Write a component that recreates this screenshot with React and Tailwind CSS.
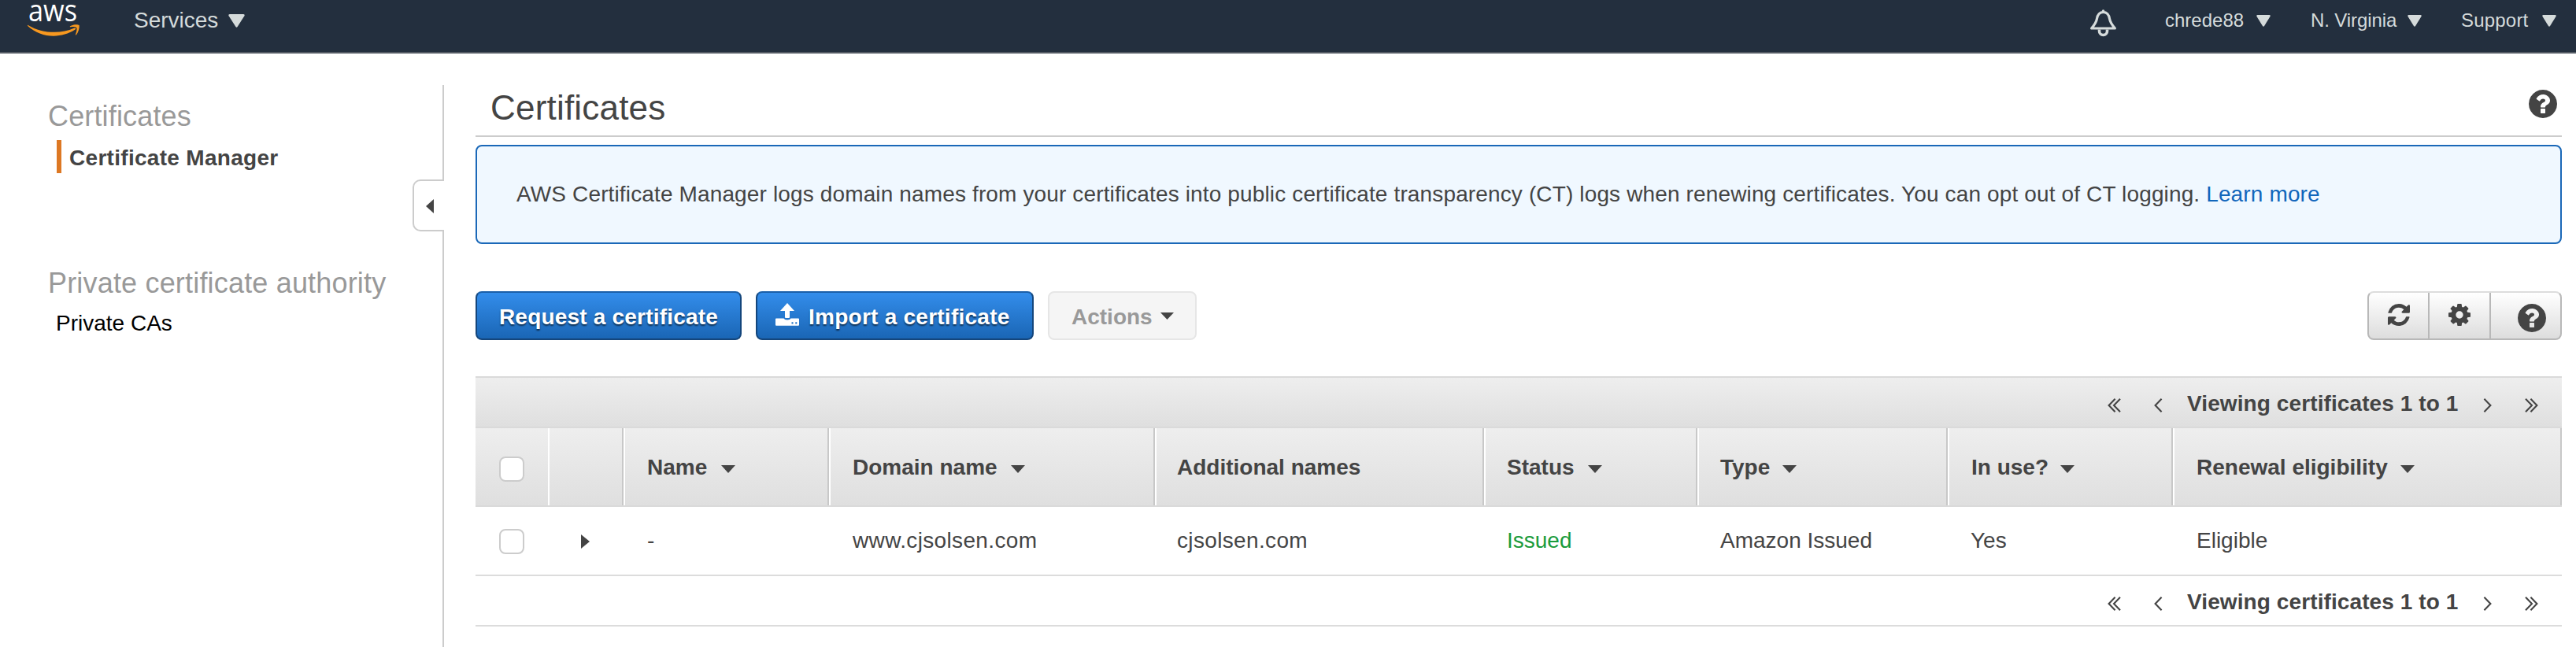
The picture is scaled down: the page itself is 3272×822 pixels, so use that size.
function Down({ className }) {
  return (
    <svg viewBox="0 0 20 10" preserveAspectRatio="none" className={className} fill="currentColor">
      <path d="M0 0H20L10 10Z" />
    </svg>
  );
}

function NavDown({ className }) {
  return (
    <svg viewBox="0 0 20 17" preserveAspectRatio="none" className={className} fill="currentColor">
      <path d="M1.6 0H18.4Q20.4 .3 19.4 2.2L11.2 15.8Q10 17.6 8.8 15.8L.6 2.2Q-.4 .3 1.6 0Z" />
    </svg>
  );
}

const glyphs = {
  help: "M1024 1376v-192q0-14-9-23t-23-9h-192q-14 0-23 9t-9 23v192q0 14 9 23t23 9h192q14 0 23-9t9-23zm256-672q0-88-55.5-163t-138.5-116-170-41q-243 0-371 213-15 24 8 42l132 100q7 6 19 6 16 0 25-12 53-68 86-92 34-24 86-24 48 0 85.5 26t37.5 59q0 38-20 61t-68 45q-63 28-115.5 86.5t-52.5 125.5v36q0 14 9 23t23 9h192q14 0 23-9t9-23q0-19 21.5-49.5t54.5-49.5q32-18 49-28.5t46-35 44.5-48 28-60.5 12.5-81zm384 192q0 209-103 385.5t-279.5 279.5-385.5 103-385.5-103-279.5-279.5-103-385.5 103-385.5 279.5-279.5 385.5-103 385.5 103 279.5 279.5 103 385.5z",
  refresh: "M1639 1056q0 5-1 7-64 268-268 434.5t-478 166.5q-146 0-282.5-55t-243.5-157l-129 129q-19 19-45 19t-45-19-19-45v-448q0-26 19-45t45-19h448q26 0 45 19t19 45-19 45l-137 137q71 66 161 102t187 36q134 0 250-65t186-179q11-17 53-117 8-23 30-23h192q13 0 22.5 9.5t9.5 22.5zm25-800v448q0 26-19 45t-45 19h-448q-26 0-45-19t-19-45 19-45l138-138q-148-137-349-137-134 0-250 65t-186 179q-11 17-53 117-8 23-30 23h-199q-13 0-22.5-9.5t-9.5-22.5v-7q65-268 270-434.5t480-166.5q146 0 284 55.5t245 156.5l130-129q19-19 45-19t45 19 19 45z",
  cog: "M1152 896q0-106-75-181t-181-75-181 75-75 181 75 181 181 75 181-75 75-181zm512-109v222q0 12-8 23t-20 13l-185 28q-19 54-39 91 35 50 107 138 10 12 10 25t-9 23q-27 37-99 108t-94 71q-12 0-26-9l-138-108q-44 23-91 38-16 136-29 186-7 28-36 28h-222q-14 0-24.5-8.5t-11.5-21.5l-28-184q-49-16-90-37l-141 107q-10 9-25 9-14 0-25-11-126-114-165-168-7-10-7-23 0-12 8-23 15-21 51-66.5t54-70.5q-27-50-41-99l-183-27q-13-2-21-12.5t-8-23.5v-222q0-12 8-23t19-13l186-28q14-46 39-92-40-57-107-138-10-12-10-24 0-10 9-23 26-36 98.5-107.5t94.5-71.5q13 0 26 10l138 107q44-23 91-38 16-136 29-186 7-28 36-28h222q14 0 24.5 8.5t11.5 21.5l28 184q49 16 90 37l142-107q9-9 24-9 13 0 25 10 129 119 165 170 7 8 7 22 0 12-8 23-15 21-51 66.5t-54 70.5q26 50 41 98l183 28q13 2 21 12.5t8 23.5z",
};

function Glyph({ name, className }) {
  return (
    <svg viewBox="128 128 1536 1536" className={"block shrink-0 " + className} fill="#444">
      <path d={glyphs[name]} />
    </svg>
  );
}

function Chevron({ double, flip }) {
  return (
    <svg viewBox={double ? "0 0 17 18" : "0 0 11 18"} className={(double ? "w-[17px] " : "w-[11px] ") + (flip ? "-scale-x-100 " : "") + "mt-[26px] h-[18px] shrink-0"} fill="none" stroke="#444" strokeWidth="2.1">
      <path d="M9.6 .8L1.6 9L9.6 17.2" />
      {double && <path d="M16 .8L8 9L16 17.2" />}
    </svg>
  );
}

function Pager() {
  return (
    <div className="flex h-[62px] items-start pl-[2073px]">
      <Chevron double />
      <div className="w-[42px]" />
      <Chevron />
      <div className="w-[31px]" />
      <div className="h-[62px] w-[376px] text-[28px] leading-[66px] font-bold tracking-[.1px] whitespace-nowrap">Viewing certificates 1 to 1</div>
      <Chevron flip />
      <div className="w-[42px]" />
      <Chevron double flip />
    </div>
  );
}

const cols = [
  { label: "Name", value: "-", width: "w-[261px]", gap: "ml-[18px]", pad: "pl-[28px]", cell: "pl-[30px]" },
  { label: "Domain name", value: "www.cjsolsen.com", width: "w-[414px]", gap: "ml-[17px]", pad: "pl-[28px]", cell: "pl-[30px] tracking-[.35px]" },
  { label: "Additional names", value: "cjsolsen.com", width: "w-[418px]", gap: null, pad: "pl-[26px]", cell: "pl-[28px] tracking-[.35px]" },
  { label: "Status", value: "Issued", width: "w-[271px]", gap: "ml-[17px]", pad: "pl-[27px]", cell: "pl-[29px] text-[#1a9b3c]" },
  { label: "Type", value: "Amazon Issued", width: "w-[318px]", gap: "ml-[16px]", pad: "pl-[27px]", cell: "pl-[29px]" },
  { label: "In use?", value: "Yes", width: "w-[286px]", gap: "ml-[15px]", pad: "pl-[28px]", cell: "pl-[29px]" },
  { label: "Renewal eligibility", value: "Eligible", width: "w-[494px]", gap: "ml-[16px]", pad: "pl-[28px]", cell: "pl-[30px]" },
];

export default function App() {
  return (
    <div className="h-[822px] w-[3272px] overflow-hidden bg-white font-['Liberation_Sans',Arial,sans-serif] text-[#444]">
      <header className="flex h-[68px] items-start border-b-2 border-[#545b64] bg-[#232f3e] text-[#d5dbdb]">
        <svg viewBox="0 0 66 48" className="ml-[35px] h-12 w-[66px] shrink-0" fill="#f7981f">
          <text x="1" y="26.500" textLength="62" lengthAdjust="spacingAndGlyphs" fill="#fff" fontSize="38" fontWeight="500" className="font-['Open_Sans',sans-serif]">aws</text>
          <g transform="translate(0 31)">
            <path d="M.6 .9C18 11.5 42 12.5 59 4.8C61 4 62 5.6 60.500 6.600C42 18.500 17 17.500 .2 2C-.2 1.300 0 .6 .6 .9Z" />
            <path d="M54 2.200C57.500 -.2 64 -.3 65.400 .8C66.400 2 65 10 61.800 13.300C61.200 13.800 60.600 13.500 60.900 12.900C62 10.200 63 6 62.300 4.300C61.500 2.800 57.500 3 54.700 3.200C53.900 3.300 53.500 2.700 54 2.200Z" />
          </g>
        </svg>
        <div className="ml-[69px] w-[120px] pt-[10px] text-[28px] leading-8">Services</div>
        <NavDown className="mt-[18px] h-[17px] w-[21px]" />
        <svg viewBox="0 0 35 36" className="mt-[11px] ml-[2343px] h-9 w-[35px]" fill="none" stroke="currentColor">
          <path d="M17.500 4.500C12 4.500 10.200 8 9.400 13C8.600 18 6.500 20.500 2.600 25H32.400C28.500 20.500 26.400 18 25.600 13C24.800 8 23 4.500 17.500 4.500Z" strokeWidth="3.200" strokeLinejoin="round" />
          <circle cx="17.500" cy="3" r="1.800" fill="currentColor" stroke="none" />
          <path d="M12.500 26.500V28.500A5 5 0 0 0 22.500 28.500V26.500" strokeWidth="3.600" />
        </svg>
        <div className="ml-[61px] w-[116px] pt-[10px] text-[24px] leading-[32px]">chrede88</div>
        <NavDown className="mt-[19px] h-[15px] w-[18px]" />
        <div className="ml-[51px] w-[123px] pt-[10px] text-[24px] leading-[32px] tracking-[-.1px] whitespace-nowrap">N. Virginia</div>
        <NavDown className="mt-[19px] h-[15px] w-[18px]" />
        <div className="ml-[50px] w-[103px] pt-[10px] text-[24px] leading-[32px] tracking-[.2px]">Support</div>
        <NavDown className="mt-[19px] h-[15px] w-[18px]" />
      </header>

      <div className="flex">
        <aside className="flex w-[604px] items-start">
          <div className="w-[524px] whitespace-nowrap">
            <div className="mt-[60px] ml-[61px] text-[36px] leading-[40px] tracking-[.15px] text-[#999]">Certificates</div>
            <div className="mt-[10px] ml-[72px] h-[42px] border-l-[6px] border-[#dd7823] pl-[10px] text-[28px] leading-[45px] font-bold tracking-[.3px]">Certificate Manager</div>
            <div className="mt-[120px] ml-[61px] text-[36px] leading-[40px] tracking-[.18px] text-[#999]">Private certificate authority</div>
            <div className="mt-[15px] ml-[71px] text-[28px] leading-8 text-black">Private CAs</div>
          </div>
          <div className="mt-10 flex w-10 flex-col">
            <div className="h-[120px] border-r-2 border-[#ccc]" />
            <div className="flex h-[66px] items-center rounded-l-[10px] border-2 border-r-0 border-[#ccc] pl-[15px]">
              <svg viewBox="0 0 10 18" className="mt-[2px] h-[18px] w-[10px]" fill="#444"><path d="M10 0V18L0 9Z" /></svg>
            </div>
            <div className="h-[530px] border-r-2 border-[#ccc]" />
          </div>
        </aside>

        <main className="w-[2650px]">
          <div className="flex h-[106px] justify-between border-b-2 border-[#ccc] pr-[6px] pl-[19px]">
            <h1 className="pt-[44px] text-[44px] leading-[50px] tracking-[.2px]">Certificates</h1>
            <div className="pt-[46px]"><Glyph name="help" className="size-9" /></div>
          </div>
          <div className="mt-[10px] h-[126px] rounded-lg border-2 border-[#1a68b8] bg-[#f0f8ff] pl-[50px] text-[28px] leading-[121px] tracking-[.137px] whitespace-nowrap">
            AWS Certificate Manager logs domain names from your certificates into public certificate transparency (CT) logs when renewing certificates. You can opt out of CT logging. <a className="text-[#1166bb]">Learn more</a>
          </div>
          <div className="mt-[60px] flex h-[62px] text-[28px] leading-[61px] font-bold whitespace-nowrap">
            <button className="flex w-[338px] justify-center rounded-lg border-2 border-[#14467c] border-t-[#1a5fa8] bg-linear-to-b from-[#338deb] to-[#1a66b5] tracking-[.2px] text-white [text-shadow:0_2px_2px_#0009]">Request a certificate</button>
            <button className="ml-[18px] flex w-[353px] rounded-lg border-2 border-[#14467c] border-t-[#1a5fa8] bg-linear-to-b from-[#338deb] to-[#1a66b5] pl-[23px] tracking-[.25px] text-white [text-shadow:0_2px_2px_#0009]">
              <svg viewBox="0 0 30 29" className="mt-[13px] mr-[12px] h-[29px] w-[30px]" fill="#fff">
                <path d="M15 0L24 10H18V18Q18 19 17 19H13Q12 19 12 18V10H6Z" />
                <path fillRule="evenodd" d="M1 19.500H10.500Q11.500 21.500 15 21.500Q18.500 21.500 19.500 19.500H29Q30 19.500 30 20.500V27.500Q30 28.700 29 28.700H1Q0 28.700 0 27.500V20.500Q0 19.500 1 19.500ZM20.500 24.300V26.500H22.500V24.300ZM25.300 24.300V26.500H27.300V24.300Z" />
              </svg>
              Import a certificate
            </button>
            <button className="ml-[18px] flex w-[189px] rounded-lg border-2 border-[#e6e6e6] bg-[#f5f5f5] pl-[28px] text-[#999]">
              <span className="w-[113px] text-left">Actions</span>
              <Down className="mt-[25px] h-[9px] w-[17px] text-[#444]" />
            </button>
            <div className="ml-auto flex h-[62px] w-[247px] rounded-lg border-2 border-[#b8b8b8] border-t-[#ddd] bg-linear-to-b from-white to-[#ddd]">
              <div className="w-[77px] border-r-2 border-[#b8b8b8] pt-[14px] pl-[24px]"><Glyph name="refresh" className="size-7" /></div>
              <div className="w-[78px] border-r-2 border-[#b8b8b8] pt-[14px] pl-[24px]"><Glyph name="cog" className="size-7" /></div>
              <div className="pt-[14px] pl-[34px]"><Glyph name="help" className="size-9" /></div>
            </div>
          </div>

          <section className="mt-[46px] text-[28px] whitespace-nowrap">
            <div className="h-[66px] border-y-2 border-[#dadada] bg-linear-to-b from-[#eee] to-[#dfdfdf]"><Pager /></div>
            <div className="flex h-[100px] border-b-2 border-[#dadada] bg-linear-to-b from-[#eee] to-[#dfdfdf] font-bold">
              <div className="w-[94px] border-r-2 border-white pt-[36px] pl-[30px]"><div className="size-8 rounded-lg border-2 border-[#ccc] bg-white" /></div>
              <div className="w-[94px] border-r-2 border-[#c8c8c8]" />
              {cols.map((c) => (
                <div key={c.label} className={"flex border-r-2 border-l-2 border-r-[#c8c8c8] border-l-white leading-[100px] " + c.width + " " + c.pad}>
                  {c.label}
                  {c.gap && <Down className={"mt-[47px] h-[10px] w-[18px] " + c.gap} />}
                </div>
              ))}
            </div>
            <div className="flex h-[88px] border-b-2 border-[#dcdcdc] leading-[85px]">
              <div className="w-[94px] pt-[28px] pl-[30px]"><div className="size-8 rounded-lg border-2 border-[#ccc] bg-white" /></div>
              <div className="w-[94px] pt-[35px] pl-[40px]">
                <svg viewBox="0 0 10 18" className="h-[18px] w-[11px]" preserveAspectRatio="none" fill="#444"><path d="M0 0V18L10 9Z" /></svg>
              </div>
              {cols.map((c) => (
                <div key={c.label} className={c.width + " " + c.cell}>{c.value}</div>
              ))}
            </div>
            <div className="h-16 border-b-2 border-[#dcdcdc]"><Pager /></div>
          </section>
        </main>
      </div>
    </div>
  );
}
